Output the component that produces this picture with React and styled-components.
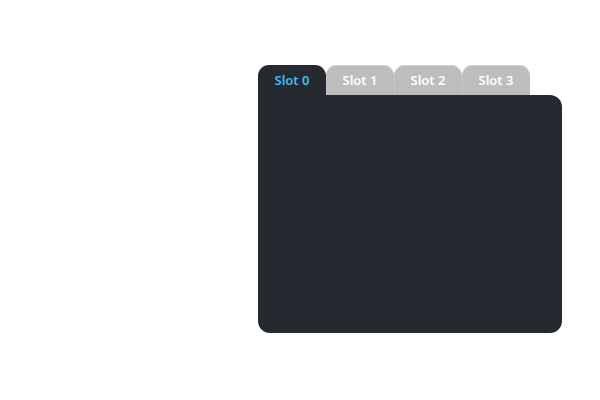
import styled, { createGlobalStyle } from "styled-components";

const GlobalStyle = createGlobalStyle`
  html, body {
    margin: 0;
    padding: 0;
    background: #ffffff;
    font-family: "Noto Sans", "Open Sans", sans-serif;
  }
`;

const Page = styled.div`
  width: 600px;
  height: 400px;
  box-sizing: border-box;
  padding: 65px 0 0 258px;
`;

const Tabs = styled.div`
  width: 304px;
`;

const TabBar = styled.div`
  display: flex;
  height: 30px;
`;

const Tab = styled.button`
  width: 68px;
  height: 30px;
  box-sizing: border-box;
  margin: 0;
  padding: 0;
  border: none;
  border-radius: 11px 11px 0 0;
  font-family: "Noto Sans", "Open Sans", sans-serif;
  font-size: 13px;
  font-weight: 600;
  cursor: pointer;
  background: ${(p) => (p.$active ? "#252a31" : "#bdbdbd")};
  color: ${(p) => (p.$active ? "#3cbfef" : "#ffffff")};
  box-shadow: ${(p) => (p.$active ? "none" : "inset 0 1px 0 #cfcfcf, inset 1px 0 0 #c6c6c6")};
`;

const Panel = styled.div`
  height: 238px;
  background: #252a31;
  border-radius: 0 12px 12px 12px;
`;

export default function App() {
  const slots = ["Slot 0", "Slot 1", "Slot 2", "Slot 3"];
  return (
    <Page>
      <GlobalStyle />
      <Tabs>
        <TabBar>
          {slots.map((s, i) => (
            <Tab key={s} $active={i === 0}>
              {s}
            </Tab>
          ))}
        </TabBar>
        <Panel />
      </Tabs>
    </Page>
  );
}
